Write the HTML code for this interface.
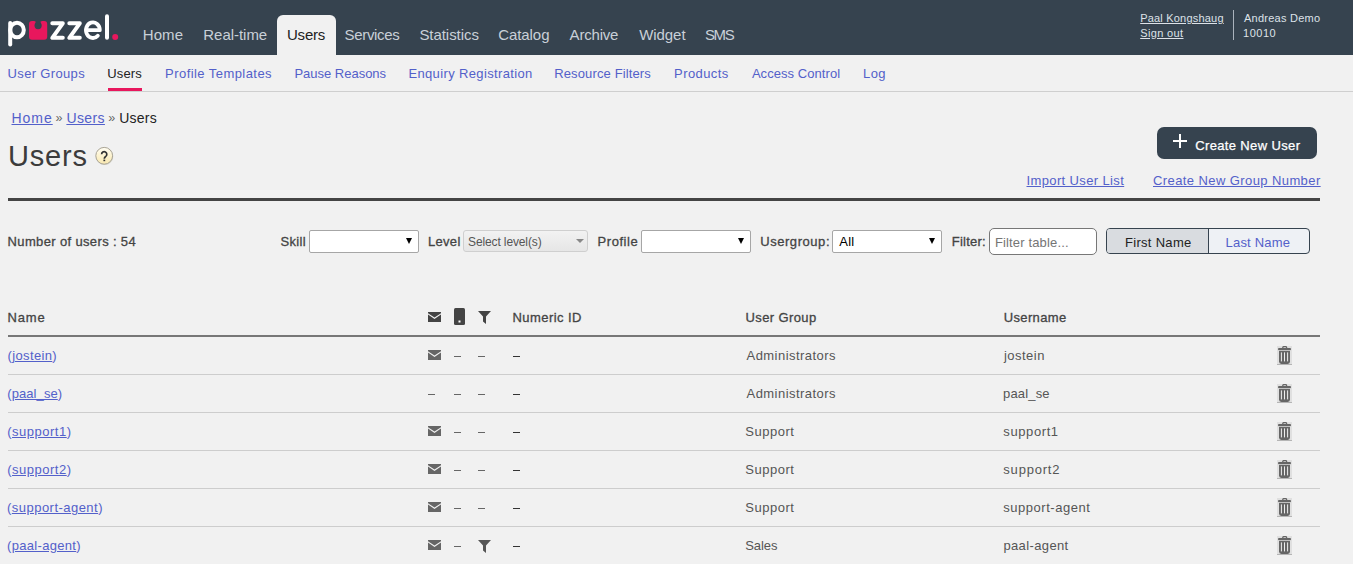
<!DOCTYPE html>
<html>
<head>
<meta charset="utf-8">
<title>Users</title>
<style>
html,body{margin:0;padding:0;}
body{width:1353px;height:564px;overflow:hidden;background:#f1f1f1;font-family:"Liberation Sans",sans-serif;position:relative;}
.a{position:absolute;}
.t{position:absolute;white-space:nowrap;line-height:1;}
.u{text-decoration:underline;}
.sel{position:absolute;top:230px;height:21px;width:108px;background:#fff;border:1px solid #a6a6a6;border-radius:2px;}
.arr{position:absolute;width:0;height:0;border-left:3.5px solid transparent;border-right:3.5px solid transparent;border-top:6px solid #000;}
.rowline{position:absolute;left:8px;width:1312px;height:1px;background:#cdcdcd;}
.dash{position:absolute;width:7px;height:1px;background:#666;}
</style>
</head>
<body>
<div class="a" style="left:0;top:0;width:1353px;height:55px;background:#36434f"></div>
<svg class="a" style="left:0;top:0" width="130" height="55" viewBox="0 0 130 55">
  <g fill="none" stroke="#fff" stroke-width="4" stroke-linecap="round" stroke-linejoin="round">
    <line x1="10.2" y1="23" x2="10.2" y2="44.5"/>
    <ellipse cx="17" cy="30" rx="6.8" ry="7.3"/>
    <polyline points="52.3,23.3 62.8,23.3 52.3,37.8 62.8,37.8"/>
    <polyline points="69.3,23.3 79.8,23.3 69.3,37.8 79.8,37.8"/>
    <path d="M86.2 30.2 H99.8 A6.9 7.8 0 1 0 97.8 35.7" stroke-width="3.8"/>
    <line x1="107" y1="16.3" x2="107" y2="37.8"/>
  </g>
  <rect x="29" y="21" width="18.2" height="18.8" rx="3" fill="#e8175d"/><circle cx="38.1" cy="25.6" r="3.6" fill="#36434f"/><rect x="35.6" y="20" width="5" height="5" fill="#36434f"/><path d="M34.2 21 A1.6 1.6 0 0 1 35.6 22.6 V21Z M42 21 A1.6 1.6 0 0 0 40.6 22.6 V21Z" fill="#36434f"/>
  <circle cx="115.2" cy="37" r="3" fill="#e8175d"/>
</svg>
<div class="a" style="left:277px;top:15px;width:59px;height:40px;background:#f1f1f1;border-radius:6px 6px 0 0"></div>

<div class="t" style="left:142.8px;top:27px;font-size:15px;color:#c9d0d8;letter-spacing:0.067px;">Home</div>
<div class="t" style="left:203.3px;top:27px;font-size:15px;color:#c9d0d8;letter-spacing:-0.038px;">Real-time</div>
<div class="t" style="left:344.6px;top:27px;font-size:15px;color:#c9d0d8;letter-spacing:-0.343px;">Services</div>
<div class="t" style="left:419.4px;top:27px;font-size:15px;color:#c9d0d8;letter-spacing:-0.056px;">Statistics</div>
<div class="t" style="left:498.2px;top:27px;font-size:15px;color:#c9d0d8;letter-spacing:-0.067px;">Catalog</div>
<div class="t" style="left:569.6px;top:27px;font-size:15px;color:#c9d0d8;letter-spacing:-0.2px;">Archive</div>
<div class="t" style="left:639.2px;top:27px;font-size:15px;color:#c9d0d8;letter-spacing:-0.06px;">Widget</div>
<div class="t" style="left:704.9px;top:27px;font-size:15px;color:#c9d0d8;letter-spacing:-1.3px;">SMS</div>
<div class="t" style="left:287.0px;top:27px;font-size:15px;color:#222;letter-spacing:-0.225px;">Users</div>
<div class="t" style="left:1140.2px;top:13px;font-size:11px;color:#dde2e8;letter-spacing:0.2px;text-decoration:underline;">Paal Kongshaug</div>
<div class="t" style="left:1140.2px;top:28px;font-size:11px;color:#dde2e8;letter-spacing:0.371px;text-decoration:underline;">Sign out</div>
<div class="a" style="left:1233px;top:10px;width:1px;height:30px;background:#aab3bd"></div>
<div class="t" style="left:1244.0px;top:13px;font-size:11px;color:#dde2e8;letter-spacing:0.245px;">Andreas Demo</div>
<div class="t" style="left:1243.0px;top:28px;font-size:11px;color:#dde2e8;letter-spacing:0.525px;">10010</div>
<div class="a" style="left:0;top:91px;width:1353px;height:1px;background:#cfcfcf"></div>
<div class="t" style="left:7.6px;top:67px;font-size:13px;color:#5360ca;letter-spacing:0.34px;">User Groups</div>
<div class="t" style="left:165.1px;top:67px;font-size:13px;color:#5360ca;letter-spacing:0.438px;">Profile Templates</div>
<div class="t" style="left:294.4px;top:67px;font-size:13px;color:#5360ca;letter-spacing:-0.008px;">Pause Reasons</div>
<div class="t" style="left:408.4px;top:67px;font-size:13px;color:#5360ca;letter-spacing:0.363px;">Enquiry Registration</div>
<div class="t" style="left:554.2px;top:67px;font-size:13px;color:#5360ca;letter-spacing:0.133px;">Resource Filters</div>
<div class="t" style="left:674.1px;top:67px;font-size:13px;color:#5360ca;letter-spacing:0.4px;">Products</div>
<div class="t" style="left:751.9px;top:67px;font-size:13px;color:#5360ca;letter-spacing:0.062px;">Access Control</div>
<div class="t" style="left:863.0px;top:67px;font-size:13px;color:#5360ca;letter-spacing:0.45px;">Log</div>
<div class="t" style="left:107.2px;top:67px;font-size:13px;color:#222;letter-spacing:0.175px;">Users</div>
<div class="a" style="left:108px;top:88px;width:34px;height:3px;background:#e8175d"></div>
<div class="t" style="left:11.5px;top:111px;font-size:14px;color:#5360ca;letter-spacing:0.967px;text-decoration:underline;">Home</div>
<div class="t" style="left:55.6px;top:111.5px;font-size:12.5px;color:#666;letter-spacing:0.0px;">&raquo;</div>
<div class="t" style="left:66.4px;top:111px;font-size:14px;color:#5360ca;letter-spacing:0.4px;text-decoration:underline;">Users</div>
<div class="t" style="left:108.2px;top:111.5px;font-size:12.5px;color:#666;letter-spacing:0.0px;">&raquo;</div>
<div class="t" style="left:119.3px;top:111px;font-size:14px;color:#222;letter-spacing:0.2px;">Users</div>
<div class="t" style="left:7.9px;top:142px;font-size:29px;color:#3c3c3c;letter-spacing:0.85px;">Users</div>
<svg class="a" style="left:94px;top:146px" width="22" height="22" viewBox="0 0 22 22"><defs><linearGradient id="hg" x1="0" y1="0" x2="0" y2="1"><stop offset="0" stop-color="#fffdf3"/><stop offset="0.5" stop-color="#fdf3cf"/><stop offset="1" stop-color="#f8e7b0"/></linearGradient></defs><circle cx="10.7" cy="10.4" r="8.6" fill="#d8d8d0"/><circle cx="10.2" cy="9.8" r="8.4" fill="url(#hg)" stroke="#aaa596" stroke-width="1"/><path d="M7.6 8.3 A2.6 2.6 0 1 1 11.7 10.4 Q10.3 11.2 10.3 12.7" fill="none" stroke="#333" stroke-width="1.7"/><rect x="9.4" y="13.6" width="1.8" height="1.6" fill="#333"/></svg>
<div class="a" style="left:1157px;top:127px;width:160px;height:32px;background:#36434f;border-radius:7px"></div>
<div class="a" style="left:1173px;top:140px;width:14px;height:2px;background:#fff"></div>
<div class="a" style="left:1179px;top:134px;width:2px;height:14px;background:#fff"></div>
<div class="t" style="left:1195.2px;top:139px;font-size:13px;color:#fff;letter-spacing:0.364px;-webkit-text-stroke:0.25px #fff;">Create New User</div>
<div class="t" style="left:1026.5px;top:174px;font-size:13px;color:#5360ca;letter-spacing:0.373px;text-decoration:underline;">Import User List</div>
<div class="t" style="left:1153.0px;top:174px;font-size:13px;color:#5360ca;letter-spacing:0.409px;text-decoration:underline;">Create New Group Number</div>
<div class="a" style="left:8px;top:198px;width:1312px;height:3px;background:#444"></div>
<div class="t" style="left:7.6px;top:235px;font-size:13px;-webkit-text-stroke:0.3px #444;color:#444;letter-spacing:0.353px;">Number of users : 54</div>
<div class="t" style="left:280.5px;top:235px;font-size:13px;-webkit-text-stroke:0.3px #444;color:#444;letter-spacing:0.35px;">Skill</div>
<div class="sel" style="left:309px"><div class="arr" style="left:96px;top:7px"></div></div>
<div class="t" style="left:428.0px;top:235px;font-size:13px;-webkit-text-stroke:0.3px #444;color:#444;letter-spacing:0.3px;">Level</div>
<div class="a" style="left:463px;top:230px;width:123px;height:20px;border:1px solid #cfcfcf;border-radius:3px;background:linear-gradient(#f2f2f2,#e6e6e6)"></div>
<div class="t" style="left:468.0px;top:236px;font-size:12px;color:#555;letter-spacing:-0.121px;">Select level(s)</div>
<div class="arr" style="left:576px;top:239px;border-top-color:#888;border-left-width:4px;border-right-width:4px;border-top-width:4px"></div>
<div class="t" style="left:597.6px;top:235px;font-size:13px;-webkit-text-stroke:0.3px #444;color:#444;letter-spacing:0.533px;">Profile</div>
<div class="sel" style="left:641px"><div class="arr" style="left:96px;top:7px"></div></div>
<div class="t" style="left:760.2px;top:235px;font-size:13px;-webkit-text-stroke:0.3px #444;color:#444;letter-spacing:0.556px;">Usergroup:</div>
<div class="sel" style="left:832px"><div class="arr" style="left:96px;top:7px"></div></div>
<div class="t" style="left:839.3px;top:235px;font-size:13px;color:#000;letter-spacing:0.2px;">All</div>
<div class="t" style="left:951.7px;top:235px;font-size:13px;-webkit-text-stroke:0.3px #444;color:#444;letter-spacing:0.25px;">Filter:</div>
<div class="a" style="left:989px;top:228px;width:106px;height:25px;border:1px solid #777;border-radius:5px;background:#fff"></div>
<div class="t" style="left:994.9px;top:236px;font-size:13px;color:#757575;letter-spacing:0.15px;">Filter table...</div>
<div class="a" style="left:1106px;top:228px;width:202px;height:24px;border:1px solid #36434f;border-radius:4px;background:#eef1f5;overflow:hidden"><div class="a" style="left:0;top:0;width:101px;height:24px;background:#d9dce0;border-right:1px solid #36434f"></div></div>
<div class="t" style="left:1125.0px;top:236px;font-size:13px;color:#222;letter-spacing:0.3px;">First Name</div>
<div class="t" style="left:1225.5px;top:236px;font-size:13px;color:#5360ca;letter-spacing:0.213px;">Last Name</div>
<div class="t" style="left:7.5px;top:311px;font-size:13px;-webkit-text-stroke:0.3px #444;color:#444;letter-spacing:0.833px;">Name</div>
<svg class="a" style="left:428px;top:312px" width="13" height="10" viewBox="0 0 13 10"><path fill="#444" d="M0 0H13V1.2L6.5 5.5L0 1.2Z M0 2.6L6.5 6.9L13 2.6V10H0Z"/></svg>
<svg class="a" style="left:454px;top:308px" width="11" height="17" viewBox="0 0 11 17"><rect x="0" y="0" width="11" height="17" rx="1.5" fill="#444"/><rect x="4.5" y="12.5" width="2" height="2" fill="#fff"/></svg>
<svg class="a" style="left:478px;top:311px" width="13" height="13" viewBox="0 0 13 13"><path fill="#444" d="M0 0H13L8 5.5V13L5 10.5V5.5Z"/></svg>
<div class="t" style="left:512.4px;top:311px;font-size:13px;-webkit-text-stroke:0.3px #444;color:#444;letter-spacing:0.456px;">Numeric ID</div>
<div class="t" style="left:745.5px;top:311px;font-size:13px;-webkit-text-stroke:0.3px #444;color:#444;letter-spacing:0.389px;">User Group</div>
<div class="t" style="left:1003.7px;top:311px;font-size:13px;-webkit-text-stroke:0.3px #444;color:#444;letter-spacing:0.371px;">Username</div>
<div class="a" style="left:8px;top:335px;width:1312px;height:2px;background:#777"></div>
<div class="t" style="left:7.5px;top:349px;font-size:13px;color:#5360ca;letter-spacing:0.362px;">(<span class="u">jostein</span>)</div>
<svg class="a" style="left:428px;top:350px" width="13" height="10" viewBox="0 0 13 10"><path fill="#666" d="M0 0H13V1.2L6.5 5.5L0 1.2Z M0 2.6L6.5 6.9L13 2.6V10H0Z"/></svg>
<div class="dash" style="left:454px;top:356px"></div>
<div class="dash" style="left:478px;top:356px"></div>
<div class="dash" style="left:513px;top:356px;background:#333"></div>
<div class="t" style="left:746.5px;top:349px;font-size:13px;color:#555;letter-spacing:0.462px;">Administrators</div>
<div class="t" style="left:1003.9px;top:349px;font-size:13px;color:#555;letter-spacing:0.483px;">jostein</div>
<svg class="a" style="left:1277px;top:346px" width="15" height="19" viewBox="0 0 15 19"><rect x="0" y="0" width="15" height="19" fill="#e0e0e0"/><rect x="0" y="18" width="15" height="1" fill="#b5b5b5"/><path d="M5.8 2.6V1.5A1 1 0 0 1 6.8 0.6H8.6A1 1 0 0 1 9.6 1.5V2.6" fill="none" stroke="#666" stroke-width="1.3"/><rect x="1" y="2.1" width="13" height="2.1" rx="1" fill="#666"/><path fill="#666" d="M2 4.9H13V15.6A2.3 2.3 0 0 1 10.7 17.9H4.3A2.3 2.3 0 0 1 2 15.6Z"/><rect x="3.9" y="6.4" width="1" height="9" fill="#eee"/><rect x="7" y="6.4" width="1" height="9" fill="#eee"/><rect x="10.1" y="6.4" width="1" height="9" fill="#eee"/></svg>
<div class="rowline" style="top:374px"></div>
<div class="t" style="left:7.3px;top:387px;font-size:13px;color:#5360ca;letter-spacing:0.075px;">(<span class="u">paal_se</span>)</div>
<div class="dash" style="left:428px;top:394px"></div>
<div class="dash" style="left:454px;top:394px"></div>
<div class="dash" style="left:478px;top:394px"></div>
<div class="dash" style="left:513px;top:394px;background:#333"></div>
<div class="t" style="left:746.5px;top:387px;font-size:13px;color:#555;letter-spacing:0.462px;">Administrators</div>
<div class="t" style="left:1003.0px;top:387px;font-size:13px;color:#555;letter-spacing:0.167px;">paal_se</div>
<svg class="a" style="left:1277px;top:384px" width="15" height="19" viewBox="0 0 15 19"><rect x="0" y="0" width="15" height="19" fill="#e0e0e0"/><rect x="0" y="18" width="15" height="1" fill="#b5b5b5"/><path d="M5.8 2.6V1.5A1 1 0 0 1 6.8 0.6H8.6A1 1 0 0 1 9.6 1.5V2.6" fill="none" stroke="#666" stroke-width="1.3"/><rect x="1" y="2.1" width="13" height="2.1" rx="1" fill="#666"/><path fill="#666" d="M2 4.9H13V15.6A2.3 2.3 0 0 1 10.7 17.9H4.3A2.3 2.3 0 0 1 2 15.6Z"/><rect x="3.9" y="6.4" width="1" height="9" fill="#eee"/><rect x="7" y="6.4" width="1" height="9" fill="#eee"/><rect x="10.1" y="6.4" width="1" height="9" fill="#eee"/></svg>
<div class="rowline" style="top:412px"></div>
<div class="t" style="left:7.2px;top:425px;font-size:13px;color:#5360ca;letter-spacing:0.511px;">(<span class="u">support1</span>)</div>
<svg class="a" style="left:428px;top:426px" width="13" height="10" viewBox="0 0 13 10"><path fill="#666" d="M0 0H13V1.2L6.5 5.5L0 1.2Z M0 2.6L6.5 6.9L13 2.6V10H0Z"/></svg>
<div class="dash" style="left:454px;top:432px"></div>
<div class="dash" style="left:478px;top:432px"></div>
<div class="dash" style="left:513px;top:432px;background:#333"></div>
<div class="t" style="left:745.2px;top:425px;font-size:13px;color:#555;letter-spacing:0.533px;">Support</div>
<div class="t" style="left:1003.3px;top:425px;font-size:13px;color:#555;letter-spacing:0.6px;">support1</div>
<svg class="a" style="left:1277px;top:422px" width="15" height="19" viewBox="0 0 15 19"><rect x="0" y="0" width="15" height="19" fill="#e0e0e0"/><rect x="0" y="18" width="15" height="1" fill="#b5b5b5"/><path d="M5.8 2.6V1.5A1 1 0 0 1 6.8 0.6H8.6A1 1 0 0 1 9.6 1.5V2.6" fill="none" stroke="#666" stroke-width="1.3"/><rect x="1" y="2.1" width="13" height="2.1" rx="1" fill="#666"/><path fill="#666" d="M2 4.9H13V15.6A2.3 2.3 0 0 1 10.7 17.9H4.3A2.3 2.3 0 0 1 2 15.6Z"/><rect x="3.9" y="6.4" width="1" height="9" fill="#eee"/><rect x="7" y="6.4" width="1" height="9" fill="#eee"/><rect x="10.1" y="6.4" width="1" height="9" fill="#eee"/></svg>
<div class="rowline" style="top:450px"></div>
<div class="t" style="left:7.2px;top:463px;font-size:13px;color:#5360ca;letter-spacing:0.511px;">(<span class="u">support2</span>)</div>
<svg class="a" style="left:428px;top:464px" width="13" height="10" viewBox="0 0 13 10"><path fill="#666" d="M0 0H13V1.2L6.5 5.5L0 1.2Z M0 2.6L6.5 6.9L13 2.6V10H0Z"/></svg>
<div class="dash" style="left:454px;top:470px"></div>
<div class="dash" style="left:478px;top:470px"></div>
<div class="dash" style="left:513px;top:470px;background:#333"></div>
<div class="t" style="left:745.2px;top:463px;font-size:13px;color:#555;letter-spacing:0.533px;">Support</div>
<div class="t" style="left:1003.3px;top:463px;font-size:13px;color:#555;letter-spacing:0.8px;">support2</div>
<svg class="a" style="left:1277px;top:460px" width="15" height="19" viewBox="0 0 15 19"><rect x="0" y="0" width="15" height="19" fill="#e0e0e0"/><rect x="0" y="18" width="15" height="1" fill="#b5b5b5"/><path d="M5.8 2.6V1.5A1 1 0 0 1 6.8 0.6H8.6A1 1 0 0 1 9.6 1.5V2.6" fill="none" stroke="#666" stroke-width="1.3"/><rect x="1" y="2.1" width="13" height="2.1" rx="1" fill="#666"/><path fill="#666" d="M2 4.9H13V15.6A2.3 2.3 0 0 1 10.7 17.9H4.3A2.3 2.3 0 0 1 2 15.6Z"/><rect x="3.9" y="6.4" width="1" height="9" fill="#eee"/><rect x="7" y="6.4" width="1" height="9" fill="#eee"/><rect x="10.1" y="6.4" width="1" height="9" fill="#eee"/></svg>
<div class="rowline" style="top:488px"></div>
<div class="t" style="left:7.0px;top:501px;font-size:13px;color:#5360ca;letter-spacing:0.471px;">(<span class="u">support-agent</span>)</div>
<svg class="a" style="left:428px;top:502px" width="13" height="10" viewBox="0 0 13 10"><path fill="#666" d="M0 0H13V1.2L6.5 5.5L0 1.2Z M0 2.6L6.5 6.9L13 2.6V10H0Z"/></svg>
<div class="dash" style="left:454px;top:508px"></div>
<div class="dash" style="left:478px;top:508px"></div>
<div class="dash" style="left:513px;top:508px;background:#333"></div>
<div class="t" style="left:745.2px;top:501px;font-size:13px;color:#555;letter-spacing:0.533px;">Support</div>
<div class="t" style="left:1003.2px;top:501px;font-size:13px;color:#555;letter-spacing:0.542px;">support-agent</div>
<svg class="a" style="left:1277px;top:498px" width="15" height="19" viewBox="0 0 15 19"><rect x="0" y="0" width="15" height="19" fill="#e0e0e0"/><rect x="0" y="18" width="15" height="1" fill="#b5b5b5"/><path d="M5.8 2.6V1.5A1 1 0 0 1 6.8 0.6H8.6A1 1 0 0 1 9.6 1.5V2.6" fill="none" stroke="#666" stroke-width="1.3"/><rect x="1" y="2.1" width="13" height="2.1" rx="1" fill="#666"/><path fill="#666" d="M2 4.9H13V15.6A2.3 2.3 0 0 1 10.7 17.9H4.3A2.3 2.3 0 0 1 2 15.6Z"/><rect x="3.9" y="6.4" width="1" height="9" fill="#eee"/><rect x="7" y="6.4" width="1" height="9" fill="#eee"/><rect x="10.1" y="6.4" width="1" height="9" fill="#eee"/></svg>
<div class="rowline" style="top:526px"></div>
<div class="t" style="left:7.1px;top:539px;font-size:13px;color:#5360ca;letter-spacing:0.309px;">(<span class="u">paal-agent</span>)</div>
<svg class="a" style="left:428px;top:540px" width="13" height="10" viewBox="0 0 13 10"><path fill="#666" d="M0 0H13V1.2L6.5 5.5L0 1.2Z M0 2.6L6.5 6.9L13 2.6V10H0Z"/></svg>
<div class="dash" style="left:454px;top:546px"></div>
<svg class="a" style="left:478px;top:540px" width="13" height="13" viewBox="0 0 13 13"><path fill="#555" d="M0 0H13L8 5.5V13L5 10.5V5.5Z"/></svg>
<div class="dash" style="left:513px;top:546px;background:#333"></div>
<div class="t" style="left:745.2px;top:539px;font-size:13px;color:#555;letter-spacing:-0.05px;">Sales</div>
<div class="t" style="left:1003.4px;top:539px;font-size:13px;color:#555;letter-spacing:0.378px;">paal-agent</div>
<svg class="a" style="left:1277px;top:536px" width="15" height="19" viewBox="0 0 15 19"><rect x="0" y="0" width="15" height="19" fill="#e0e0e0"/><rect x="0" y="18" width="15" height="1" fill="#b5b5b5"/><path d="M5.8 2.6V1.5A1 1 0 0 1 6.8 0.6H8.6A1 1 0 0 1 9.6 1.5V2.6" fill="none" stroke="#666" stroke-width="1.3"/><rect x="1" y="2.1" width="13" height="2.1" rx="1" fill="#666"/><path fill="#666" d="M2 4.9H13V15.6A2.3 2.3 0 0 1 10.7 17.9H4.3A2.3 2.3 0 0 1 2 15.6Z"/><rect x="3.9" y="6.4" width="1" height="9" fill="#eee"/><rect x="7" y="6.4" width="1" height="9" fill="#eee"/><rect x="10.1" y="6.4" width="1" height="9" fill="#eee"/></svg>
<div class="rowline" style="top:564px"></div>
</body>
</html>
